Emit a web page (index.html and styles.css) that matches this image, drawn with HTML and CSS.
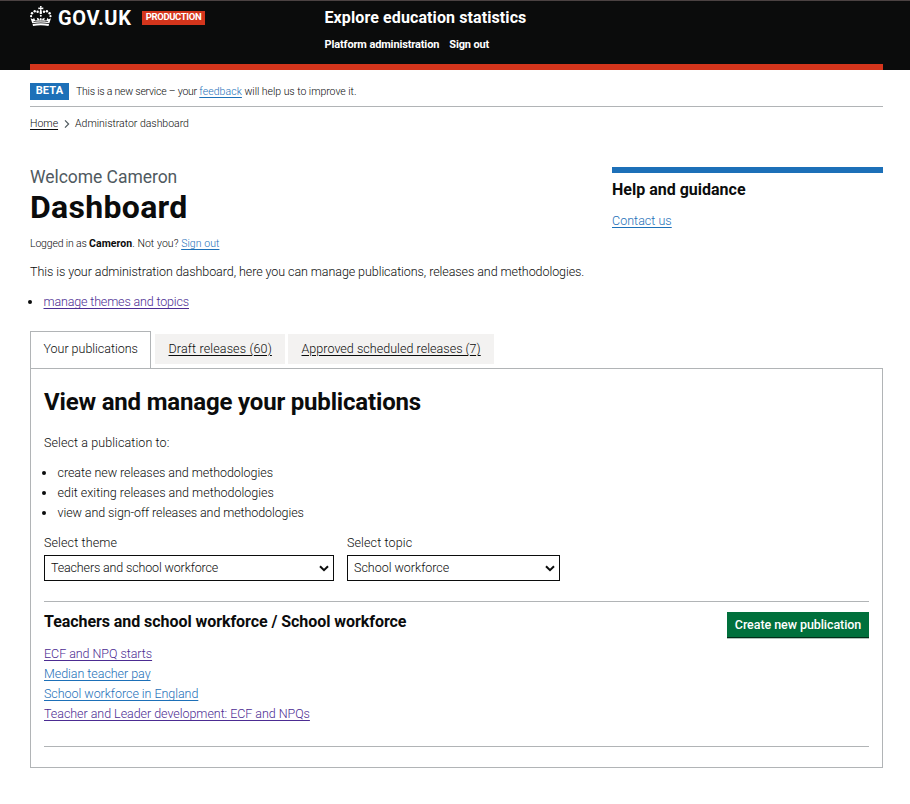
FILE: index.html
```html
<!DOCTYPE html>
<html lang="en">
<head>
<meta charset="utf-8">
<title>Dashboard - Explore education statistics</title>
<link rel="stylesheet" href="styles.css">
</head>
<body>
<header class="header">
  <div class="container header-inner">
    <div class="brand">
      <svg class="crown" viewBox="0 0 22 21" width="22" height="21" aria-hidden="true">
        <g fill="#fff">
          <path d="M9.9 0h1.8l-.4 1.8 2-.4v1.9l-2-.4.6 3.4h-2.2l.6-3.4-2 .4V1.400l2 .4z"/>
          <circle cx="10.8" cy="6.9" r="1.2"/>
          <circle cx="7.6" cy="5.8" r="1.2"/><circle cx="14" cy="5.8" r="1.2"/>
          <circle cx="4.7" cy="5.2" r="1.2"/><circle cx="16.9" cy="5.2" r="1.2"/>
          <circle cx="2" cy="7.2" r="1.2"/><circle cx="19.6" cy="7.2" r="1.2"/>
          <circle cx="1.1" cy="10.2" r="1.1"/><circle cx="20.5" cy="10.2" r="1.1"/>
          <circle cx="10.8" cy="9.8" r="1"/>
          <path d="M.6 12.2l2.5 1.1.9-1.6 1.2 2.9 2.2-.7-.6-2.1 2.5.9.3 2 .7-2.6h1l.7 2.6.3-2 2.5-.9-.6 2.1 2.2.7 1.2-2.9.9 1.6 2.5-1.1-1.7 5.1c-5.6-1.2-11.400-1.200-17 0z"/>
          <path d="M2.600 18.100c5.400-1.200 11-1.200 16.400 0l-.4 1.900c-5-.9-10.600-.9-15.600 0z"/>
        </g>
        <path d="M3.400 15.700c4.900-1 9.900-1 14.800 0" fill="none" stroke="#0b0c0c" stroke-width=".7"/>
      </svg>
      <span class="logotype">GOV.UK</span>
      <strong class="env-tag">PRODUCTION</strong>
    </div>
    <div class="service">
      <div class="service-name">Explore education statistics</div>
      <nav class="service-nav"><a>Platform administration</a><a>Sign out</a></nav>
    </div>
  </div>
</header>

<div class="container">
  <div class="phase">
    <strong class="phase-tag">BETA</strong>
    <span class="phase-text"><span class="phase-lead">This is a new service – your </span><a class="link">feedback</a><span class="phase-tail"> will help us to improve it.</span></span>
  </div>
  <nav class="breadcrumbs">
    <a class="crumb-link">Home</a>
    <svg class="chevron" viewBox="0 0 6 8" width="6" height="8" aria-hidden="true"><path d="M1 .4L4.600 4 1 7.600" fill="none" stroke="#505a5f" stroke-width="1.200"/></svg>
    <span class="crumb">Administrator dashboard</span>
  </nav>

  <main>
    <div class="intro">
      <div class="intro-main">
        <div class="caption">Welcome Cameron</div>
        <h1>Dashboard</h1>
        <p class="login"><span class="login-lead">Logged in as </span><b>Cameron</b>. Not you? <a class="link">Sign out</a></p>
        <p class="lede">This is your administration dashboard, here you can manage publications, releases and methodologies.</p>
        <ul class="bullets actions"><li><a class="link visited">manage themes and topics</a></li></ul>
      </div>
      <aside class="help">
        <h2>Help and guidance</h2>
        <a class="link">Contact us</a>
      </aside>
    </div>

    <div class="tabs">
      <a class="tab selected">Your publications</a>
      <a class="tab draft">Draft releases (60)</a>
      <a class="tab approved">Approved scheduled releases (7)</a>
    </div>
    <section class="panel">
      <h2>View and manage your publications</h2>
      <p class="prompt">Select a publication to:</p>
      <ul class="bullets">
        <li>create new releases and methodologies</li>
        <li class="loose">edit exiting releases and methodologies</li>
        <li class="tight">view and sign-off releases and methodologies</li>
      </ul>
      <div class="filters">
        <div class="field theme">
          <span class="label">Select theme</span>
          <div class="select"><span>Teachers and school workforce</span><svg viewBox="0 0 10 7" width="10" height="7" aria-hidden="true"><path d="M1 1.200l4 4 4-4" fill="none" stroke="#0b0c0c" stroke-width="2"/></svg></div>
        </div>
        <div class="field topic">
          <span class="label">Select topic</span>
          <div class="select"><span>School workforce</span><svg viewBox="0 0 10 7" width="10" height="7" aria-hidden="true"><path d="M1 1.200l4 4 4-4" fill="none" stroke="#0b0c0c" stroke-width="2"/></svg></div>
        </div>
      </div>
      <div class="results">
        <div>
          <h3>Teachers and school workforce / School workforce</h3>
          <ul class="publications">
            <li><a class="link visited">ECF and NPQ starts</a></li>
            <li><a class="link">Median teacher pay</a></li>
            <li><a class="link">School workforce in England</a></li>
            <li><a class="link visited">Teacher and Leader development: ECF and NPQs</a></li>
          </ul>
        </div>
        <button class="button" type="button">Create new publication</button>
      </div>
    </section>
  </main>
</div>
</body>
</html>
```
FILE: styles.css
```css
* { box-sizing: border-box; }
body {
  margin: 0;
  background: #fff;
  color: #0b0c0c;
  font: 300 12.5px/20px Roboto, "Liberation Sans", sans-serif;
  letter-spacing: -.045px;
}
h1, h2, h3, p, ul { margin: 0; padding: 0; }
b { font-weight: 700; }
ul { list-style: none; }
.container { width: 853px; margin-left: 30px; }

.header { height: 70px; background: #0b0c0c; border-top: 1px solid #4b4242; color: #fff; }
.header-inner { display: flex; height: 69px; border-bottom: 6px solid #d4351c; }
.brand { display: flex; width: 294.5px; height: 34px; align-items: center; }
.crown { margin-top: -3px; }
.logotype { margin-left: 6px; width: 78px; font-size: 20px; font-weight: 700; letter-spacing: .6px; }
.env-tag { margin-left: 6px; width: 63px; height: 14px; background: #d4351c; font-size: 9.5px; font-weight: 700; line-height: 12px; text-align: center; letter-spacing: -.37px; }
.service { padding-top: 7px; font-weight: 700; }
.service-name { font-size: 16px; line-height: 20px; letter-spacing: .1px; }
.service-nav { display: flex; gap: 10px; margin-top: 9px; font-size: 11px; line-height: 16px; letter-spacing: -.13px; }

.link { color: #1d70b8; text-decoration: underline 1px; text-underline-offset: 2px; text-decoration-skip-ink: none; }
.link.visited { color: #4c2c92; }

.phase { display: flex; height: 37px; padding-top: 13px; border-bottom: 1px solid #b1b4b6; font-size: 10.5px; line-height: 17px; }
.phase-tag { width: 39px; height: 17px; margin-right: 7px; background: #1d70b8; color: #fff; font-size: 11px; font-weight: 700; line-height: 16px; text-align: center; letter-spacing: .2px; }
.phase-text { letter-spacing: .07px; white-space: pre; }
.phase-lead { letter-spacing: -.22px; }
.phase-tail { letter-spacing: -.03px; }
.breadcrumbs { display: flex; align-items: center; height: 34px; font-size: 10.5px; letter-spacing: 0; }
.crumb-link { text-decoration: underline 1px; text-underline-offset: 2px; }
.chevron { margin: 0 5px 0 6px; }
.crumb { letter-spacing: -.02px; }

.intro { display: flex; justify-content: space-between; height: 166px; margin-top: 24px; }
.caption { color: #505a5f; font-size: 17.5px; font-weight: 400; line-height: 24px; letter-spacing: -.04px; }
h1 { font-size: 32px; line-height: 36px; letter-spacing: .3px; }
.login { margin-top: 10px; font-size: 10.5px; line-height: 18px; letter-spacing: .06px; }
.login-lead { letter-spacing: -.16px; }
.lede { margin-top: 9px; letter-spacing: -.07px; }
.bullets li { padding-left: 13.5px; }
.bullets li::before {
  content: "";
  display: inline-block;
  width: 4px;
  height: 4px;
  margin: 0 11.5px 0 -15.5px;
  border-radius: 50%;
  background: #0b0c0c;
  vertical-align: 2.5px;
}
.bullets .loose { letter-spacing: 0; }
.bullets .tight { letter-spacing: -.09px; }
.actions { margin-top: 10px; letter-spacing: -.15px; }
.help { width: 271px; margin-top: 2px; border-top: 6px solid #1d70b8; letter-spacing: .03px; }
.help h2 { margin: 7px 0 11px; font-size: 16px; line-height: 20px; letter-spacing: 0; }

.tabs { display: flex; height: 37px; }
.tab { height: 30px; margin: 3px 3px 0 0; padding: 5px 13.5px; background: #f3f2f1; text-decoration: underline 1px; text-underline-offset: 2px; white-space: nowrap; }
.selected { height: 37px; margin: 0 4px 0 0; padding: 7px 12.5px; width: 121px; border: 1px solid #b1b4b6; border-bottom: 0; background: #fff; text-decoration: none; letter-spacing: -.02px; }
.draft { width: 130px; letter-spacing: .14px; }
.approved { width: 206px; letter-spacing: .04px; }
.panel { height: 400px; padding: 18px 13px 0; border: 1px solid #b1b4b6; }
.panel h2 { font-size: 24px; line-height: 30px; letter-spacing: -.18px; }
.prompt { margin: 16px 0 10px; letter-spacing: .09px; }
.filters { display: flex; gap: 13px; margin-top: 10px; padding-bottom: 20px; }
.theme { width: 290px; }
.topic { width: 213px; }
.label { display: block; height: 22px; letter-spacing: .12px; }
.select { display: flex; justify-content: space-between; align-items: center; height: 26px; padding: 0 4px 0 6px; border: 1px solid #0b0c0c; letter-spacing: -.15px; }
.topic .select { letter-spacing: -.02px; }
.results { display: flex; justify-content: space-between; align-items: flex-start; height: 146px; padding-top: 10px; border: solid #b1b4b6; border-width: 1px 0; }
h3 { font-size: 16px; line-height: 20px; letter-spacing: -.06px; }
.publications { margin-top: 12px; }
.button { height: 26px; width: 142px; padding: 0; border: 0; background: #00703c; box-shadow: inset 0 -1px #002d18, 0 1px #b1c4ba; color: #fff; font: 500 12.5px/26px Roboto, sans-serif; letter-spacing: -.07px; }
```
